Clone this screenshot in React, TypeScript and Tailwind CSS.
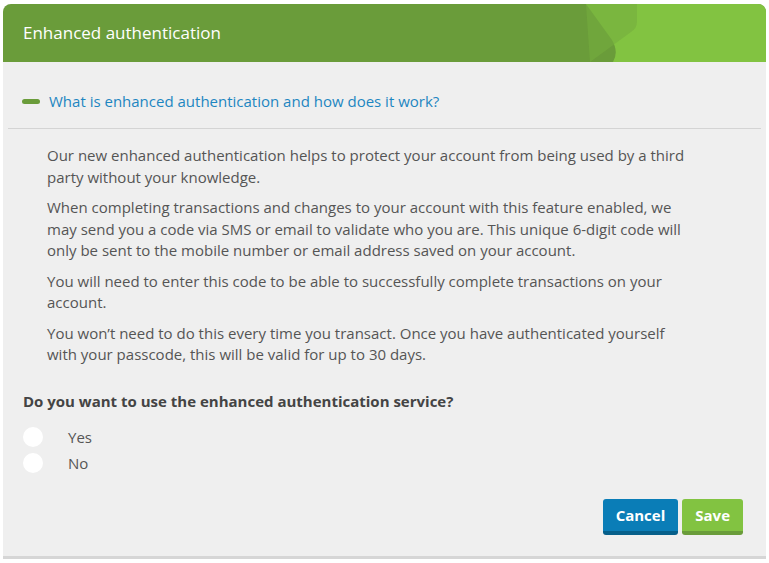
import { useState } from "react";

const paragraphs = [
  "Our new enhanced authentication helps to protect your account from being used by a third party without your knowledge.",
  "When completing transactions and changes to your account with this feature enabled, we may send you a code via SMS or email to validate who you are. This unique 6-digit code will only be sent to the mobile number or email address saved on your account.",
  "You will need to enter this code to be able to successfully complete transactions on your account.",
  "You won\u2019t need to do this every time you transact. Once you have authenticated yourself with your passcode, this will be valid for up to 30 days.",
];

export default function App() {
  const [choice, setChoice] = useState<string | null>(null);

  return (
    <div className="bg-white w-[769px] h-[563px] pt-[4px] px-[3px] font-['Open_Sans',sans-serif]">
      <div className="bg-[#efefef] rounded-t-[8px] shadow-[0_3px_0_#d6d6d6] pb-[21px]">
        {/* HEADER */}
        <div className="relative h-[58px] bg-[#6a9c3a] rounded-t-[8px] overflow-hidden flex items-center px-[20px]">
          <svg className="absolute right-0 top-0" width="180" height="58" viewBox="0 0 180 58">
            <path d="M0 0 L26 36 Q33 48 27 58 H180 V0 Z" fill="#82c341" />
            <path d="M0 0 H51 V18 Q51 24 45 28 L4 58 Z" fill="#74ad3d" opacity="0.6" />
          </svg>
          <h1 className="relative text-white text-[17px] leading-none -mt-[2px]">Enhanced authentication</h1>
        </div>

        {/* ACCORDION TITLE */}
        <div className="mx-[5px] border-b border-[#d4d4d4] pt-[29px] pb-[17px] flex items-center pl-[14px]">
          <span className="w-[18px] h-[5px] rounded-full bg-[#6a9c3a] mr-[9px]" />
          <a href="#" className="text-[#1d86c1] text-[15px] leading-[20px]">
            What is enhanced authentication and how does it work?
          </a>
        </div>

        {/* BODY TEXT */}
        <div className="pl-[44px] pr-[70px] pt-[16px] text-[#555] text-[15px] leading-[21.5px] space-y-[9px]">
          {paragraphs.map((p) => (
            <p key={p}>{p}</p>
          ))}
        </div>

        {/* QUESTION */}
        <div className="px-[20px] pt-[24px]">
          <p className="text-[#444] text-[15px] font-bold">
            Do you want to use the enhanced authentication service?
          </p>
          <div className="mt-[15px] flex flex-col gap-[6px]">
            {["Yes", "No"].map((opt) => (
              <label key={opt} className="flex items-center h-[20px] cursor-pointer text-[15px] text-[#555]">
                <span
                  onClick={() => setChoice(opt)}
                  className="w-[20px] h-[20px] rounded-full bg-white flex items-center justify-center"
                >
                  {choice === opt && <span className="w-[10px] h-[10px] rounded-full bg-[#6a9c3a]" />}
                </span>
                <span className="ml-[25px]">{opt}</span>
              </label>
            ))}
          </div>
        </div>

        {/* ACTIONS */}
        <div className="flex justify-end gap-[4px] pr-[23px] pt-[26px]">
          <button className="h-[36px] px-[13px] rounded-[3px] bg-[#0a7db7] border-b-[4px] border-[#065f8a] text-white font-bold text-[15px]">
            Cancel
          </button>
          <button className="h-[36px] px-[13px] rounded-[3px] bg-[#82c341] border-b-[4px] border-[#6a9c3a] text-white font-bold text-[15px]">
            Save
          </button>
        </div>
      </div>
    </div>
  );
}
